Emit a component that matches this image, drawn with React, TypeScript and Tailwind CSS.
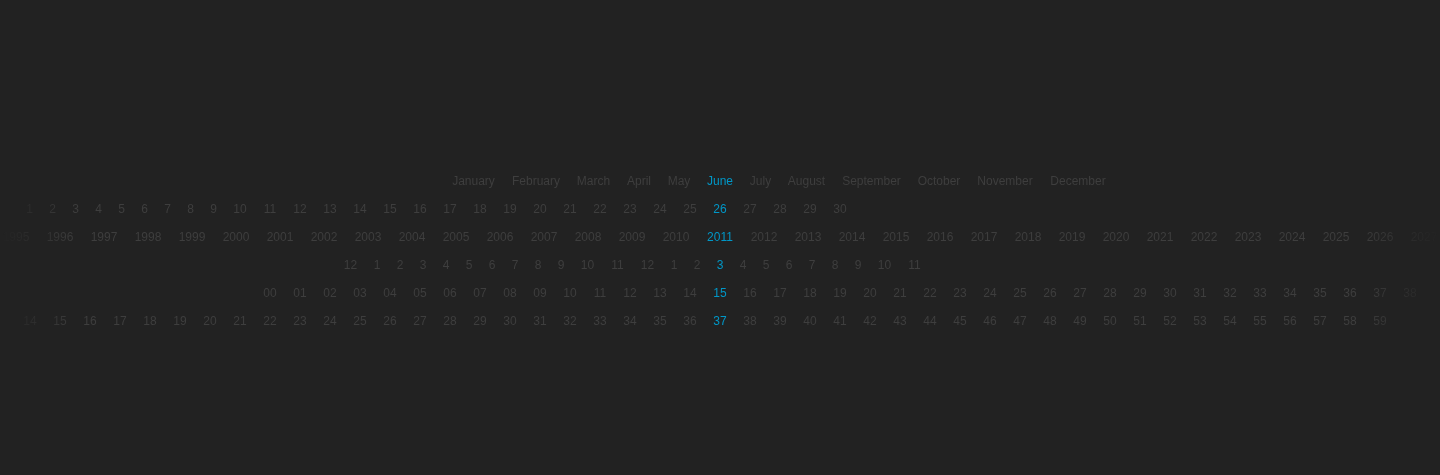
import { useState } from "react";

type Row = { label: string; items: string[]; selected: number };

const range = (from: number, to: number) =>
  Array.from({ length: to - from + 1 }, (_, i) => String(from + i));

const padded = (from: number, to: number) =>
  range(from, to).map((n) => n.padStart(2, "0"));

const rows: Row[] = [
  {
    label: "Month",
    items: [
      "January", "February", "March", "April", "May", "June",
      "July", "August", "September", "October", "November", "December",
    ],
    selected: 5,
  },
  { label: "Day", items: range(1, 30), selected: 25 },
  { label: "Year", items: range(1995, 2027), selected: 16 },
  {
    label: "Hour",
    items: ["12", ...range(1, 11), "12", ...range(1, 11)],
    selected: 15,
  },
  { label: "Minute", items: padded(0, 38), selected: 15 },
  { label: "Second", items: padded(14, 59), selected: 23 },
];

const monthWidths: Record<string, string> = {
  January: "w-[44px]",
  February: "w-[49px]",
  March: "w-[34px]",
  April: "w-[25px]",
  May: "w-[23px]",
  June: "w-[27px]",
  July: "w-[22px]",
  August: "w-[38px]",
  September: "w-[60px]",
  October: "w-[43px]",
  November: "w-[57px]",
  December: "w-[57px]",
};

const numberWidths: Record<number, string> = {
  1: "w-[7px]",
  2: "w-[14px]",
  4: "w-[28px]",
};

function Item({
  text,
  active,
  onSelect,
}: {
  text: string;
  active: boolean;
  onSelect: () => void;
}) {
  const width = monthWidths[text] ?? numberWidths[text.length];
  const color = active
    ? "text-[#0097c7]"
    : "text-[#3e3e3e] hover:text-[#777777]";
  return (
    <button
      type="button"
      aria-pressed={active}
      onClick={onSelect}
      className={`flex h-7 shrink-0 cursor-pointer items-center justify-center whitespace-nowrap ${width} ${color}`}
    >
      {text}
    </button>
  );
}

function Strip({ row }: { row: Row }) {
  const [selected, setSelected] = useState(row.selected);
  const render = (text: string, index: number) => (
    <Item
      key={index}
      text={text}
      active={index === selected}
      onSelect={() => setSelected(index)}
    />
  );
  return (
    <div role="group" aria-label={row.label} className="flex gap-4">
      <div className="flex min-w-0 flex-1 justify-end gap-4">
        {row.items.slice(0, selected).map((t, i) => render(t, i))}
      </div>
      {render(row.items[selected], selected)}
      <div className="flex min-w-0 flex-1 gap-4">
        {row.items.slice(selected + 1).map((t, i) => render(t, selected + 1 + i))}
      </div>
    </div>
  );
}

export default function App() {
  return (
    <main className="flex min-h-screen flex-col justify-center bg-[#222222] pt-[26px] font-['Liberation_Sans',Arial,sans-serif] text-xs">
      <div className="overflow-hidden [mask-image:linear-gradient(to_right,transparent,black_80px,black_calc(100%-80px),transparent)]">
        {rows.map((row) => (
          <Strip key={row.label} row={row} />
        ))}
      </div>
    </main>
  );
}
